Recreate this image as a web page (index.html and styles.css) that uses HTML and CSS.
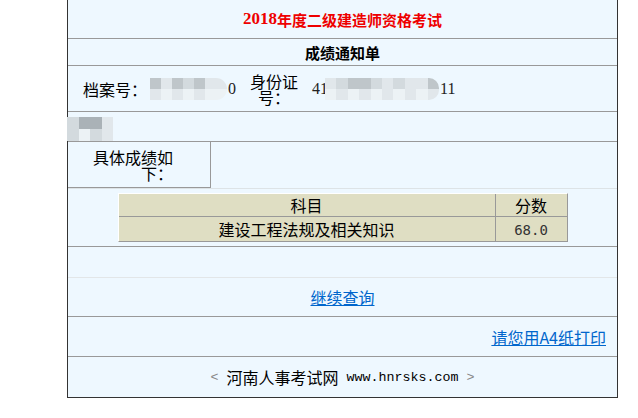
FILE: index.html
```html
<!DOCTYPE html>
<html>

<head>
    <meta charset="utf-8">
    <title>成绩通知单</title>
    <link rel="stylesheet" href="styles.css">
</head>

<body>
    <div class="sheet">
        <div class="row row-title"><span class="year">2018</span>年度二级建造师资格考试</div>
        <div class="row row-sub">成绩通知单</div>
        <div class="row row-info">
            <div class="label">档案号：</div>
            <div class="value value-file">
                <span class="mosaic mosaic-file">
                    <i class="s2"></i><i class="s4"></i><i class="s2"></i><i class="s3"></i><i class="s2"></i><i class="s4"></i><i class="s4"></i>
                    <i class="s4"></i><i class="s5"></i><i class="s4"></i><i class="s5"></i><i class="s4"></i><i class="s5"></i><i class="s5"></i>
                </span><span class="digits">0</span>
            </div>
            <div class="label label-id">身份证号：</div>
            <div class="value value-id">
                <span class="digits">41</span><span class="mosaic mosaic-id">
                    <i class="s4"></i><i class="s3"></i><i class="s2"></i><i class="s2"></i><i class="s3"></i><i class="s4"></i><i class="s3"></i><i class="s4"></i><i class="s4"></i><i class="s2"></i>
                    <i class="s5"></i><i class="s4"></i><i class="s5"></i><i class="s4"></i><i class="s5"></i><i class="s4"></i><i class="s5"></i><i class="s4"></i><i class="s5"></i><i class="s4"></i>
                </span><span class="digits">11</span>
            </div>
        </div>
        <div class="row row-photo">
            <span class="mosaic mosaic-name">
                <i class="s3"></i><i class="s1"></i><i class="s1"></i><i class="s4"></i>
                <i class="s3"></i><i class="s5"></i><i class="s3"></i><i class="s4"></i>
            </span>
        </div>
        <div class="row row-hint">
            <div class="hint">具体成绩如下：</div>
        </div>
        <div class="row row-scores">
            <table class="scores">
                <tr>
                    <td class="subject">科目</td>
                    <td class="score">分数</td>
                </tr>
                <tr>
                    <td class="subject">建设工程法规及相关知识</td>
                    <td class="score"><span class="num">68.0</span></td>
                </tr>
            </table>
        </div>
        <div class="row row-blank"></div>
        <div class="row row-link"><a href="#">继续查询</a></div>
        <div class="row row-print"><a href="#">请您用A4纸打印</a></div>
        <div class="row row-foot">
            <span class="arrow">&lt;</span><span class="gap"> </span>河南人事考试网<span class="site"> www.hnrsks.com </span><span class="arrow">&gt;</span>
        </div>
    </div>
</body>
</html>
```

FILE: styles.css
```css
body {
    margin: 0;
    font-family: "Noto Sans CJK SC", sans-serif;
    font-size: 16px;
    color: #000;
    background-color: #fff;
}

.sheet {
    margin-left: 67px;
    width: 549px;
    border: 1px solid #333;
    border-top: none;
    background-color: #eef8ff;
}

.row {
    display: flex;
    align-items: center;
    justify-content: center;
    border-bottom: 1px solid #999;
}

.row-title {
    height: 38px;
    color: #e00;
    font-size: 15px;
    font-weight: bold;
}

.year {
    font-family: "Liberation Serif", serif;
    font-size: 17px;
}

.row-sub {
    height: 26px;
    font-size: 15px;
    font-weight: bold;
}

.row-info {
    height: 45px;
    justify-content: flex-start;
    line-height: 16px;
}

.label {
    padding-left: 15px;
    width: 64px;
}

.label-id {
    padding-left: 0;
    width: 48px;
    text-align: center;
}

.value {
    display: flex;
    align-items: center;
}

.value-file {
    width: 103px;
}

.value-id {
    padding-left: 14px;
}

.digits {
    font-family: "Liberation Serif", serif;
    font-size: 16px;
    color: #222;
}

.mosaic {
    display: inline-grid;
    grid-auto-rows: 1fr;
    filter: blur(0.7px);
}

.mosaic i {
    display: block;
}

.mosaic-file {
    grid-template-columns: repeat(7, 11px);
    height: 22px;
    margin-left: 3px;
    margin-right: 1px;
    border-radius: 0 11px 11px 0;
    overflow: hidden;
}

.mosaic-id {
    grid-template-columns: repeat(10, 1fr);
    width: 114px;
    height: 22px;
    margin-left: -3px;
    margin-right: 1px;
    border-radius: 0 10px 10px 0;
    overflow: hidden;
}

.row-photo {
    height: 29px;
    justify-content: flex-start;
    align-items: flex-end;
}

.mosaic-name {
    grid-template-columns: repeat(4, 1fr);
    width: 46px;
    height: 24px;
    margin-left: -1px;
}

.s1 { background-color: #aab2b7; }
.s2 { background-color: #bfc6ca; }
.s3 { background-color: #d3dade; }
.s4 { background-color: #e1e7eb; }
.s5 { background-color: #ecf2f5; }

.row-hint {
    height: 46px;
    justify-content: flex-start;
    align-items: flex-start;
    border-bottom-color: #dde3e6;
}

.hint {
    display: flex;
    align-items: center;
    width: 85px;
    height: 45px;
    padding: 0 37px 0 20px;
    border-right: 1px solid #999;
    border-bottom: 1px solid #999;
    line-height: 16px;
    text-align: right;
}

.row-scores {
    height: 57px;
    align-items: flex-start;
}

.scores {
    margin-top: 4px;
    width: 450px;
    border-collapse: separate;
    border-spacing: 0;
    border: 1px solid;
    border-color: #fff #999 #999 #fff;
    background-color: #dfdec3;
}

.scores td {
    padding: 0;
    text-align: center;
    line-height: 16px;
}

.scores tr:first-child td {
    height: 22px;
    border-bottom: 1px solid #999;
}

.scores tr:last-child td {
    height: 24px;
}

.subject {
    width: 376px;
    border-right: 1px solid #999;
}

.num {
    font-family: "DejaVu Sans Mono", monospace;
    font-size: 14px;
    color: #333;
}

.row-blank {
    height: 30px;
    border-bottom-color: #e2e6e8;
}

.row-link {
    height: 38px;
}

.row-print {
    height: 39px;
    justify-content: flex-end;
    padding-right: 11px;
}

a {
    color: #0066cc;
    text-decoration: underline;
}

.row-foot {
    height: 40px;
    border-bottom: none;
}

.arrow,
.gap,
.site {
    font-family: "Liberation Mono", monospace;
    font-size: 13.33px;
    white-space: pre;
}

.arrow {
    color: #888;
}
```
